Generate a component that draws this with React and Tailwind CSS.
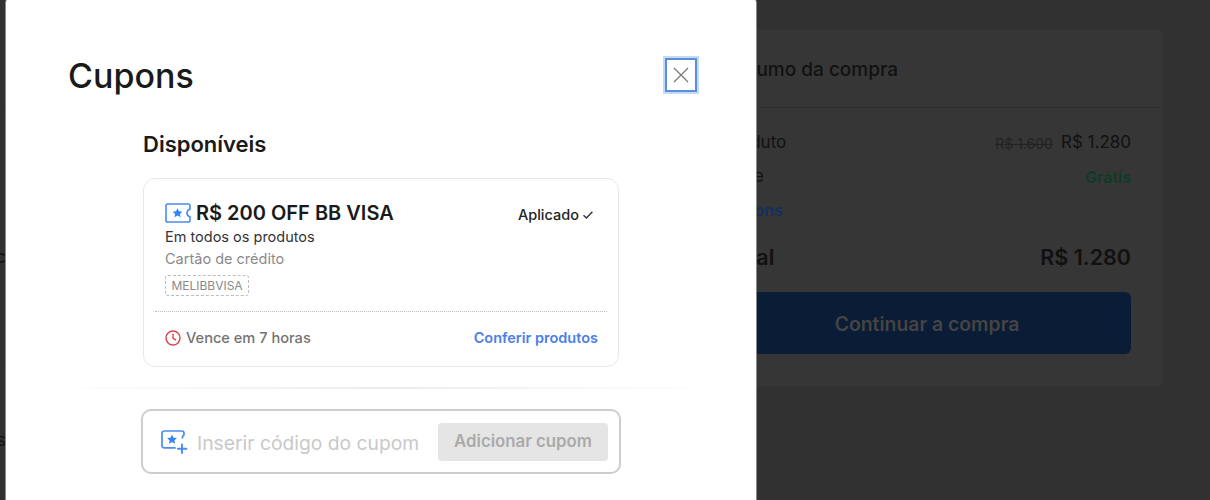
function CouponIcon({ className }) {
  return (
    <svg viewBox="0 0 26 20" fill="none" className={className}>
      <path d="M2.8 1h20.4c1 0 1.8.8 1.8 1.8v3.4a3.9 3.9 0 0 0 0 7.6v3.4c0 1-.8 1.8-1.8 1.8H2.8c-1 0-1.8-.8-1.8-1.8V2.8C1 1.8 1.8 1 2.8 1Z" stroke="#4a8cf0" strokeWidth="1.6" />
      <path d="m12.5 5.2 1.5 3.1 3.4.4-2.5 2.3.7 3.3-3.1-1.7-3 1.7.6-3.3-2.5-2.3 3.4-.4Z" fill="#3483fa" />
    </svg>
  );
}

function AddCouponIcon({ className }) {
  return (
    <svg viewBox="0 0 27 24" fill="none" className={className}>
      <path d="M14 17.9H3.2c-1.2 0-2.2-1-2.2-2.2V3.2C1 2 2 1 3.2 1h17.6c1.2 0 2.2 1 2.2 2.2v1.6a3.4 3.4 0 0 0-1.6 3.1" stroke="#4a8cf0" strokeWidth="1.7" strokeLinecap="round" />
      <path d="m11 4.6 1.5 3.1 3.4.4-2.5 2.3.7 3.3-3.1-1.7-3 1.7.6-3.3-2.5-2.3 3.4-.4Z" fill="#3483fa" />
      <path d="M21 14.5v8.5M16.8 18.8h8.6" stroke="#4a8cf0" strokeWidth="1.9" strokeLinecap="round" />
    </svg>
  );
}

function ClockIcon({ className }) {
  return (
    <svg viewBox="0 0 16 16" fill="none" className={className}>
      <circle cx="8" cy="8" r="7" stroke="#d9434e" strokeWidth="1.4" />
      <path d="M8 3.8V8.4l3 1.8" stroke="#d9434e" strokeWidth="1.4" />
    </svg>
  );
}

function LeftStrip() {
  return (
    <div className="w-[6px] shrink-0 overflow-hidden text-[#111] text-[18px]">
      <div className="h-[108px] border-b border-[#2e2e2e]" />
      <div className="flex justify-end h-[24px] mt-[137px] leading-[24px] whitespace-nowrap">
        <span className="shrink-0">c</span>
      </div>
      <div className="h-[99px] border-b border-[#2e2e2e]" />
      <div className="flex justify-end h-[24px] mt-[60px] leading-[24px] whitespace-nowrap">
        <span className="shrink-0">s</span>
      </div>
    </div>
  );
}

function Summary() {
  return (
    <div className="w-[472px] h-[356px] shrink-0 rounded-[6px] bg-[#363636] text-[#111]">
      <div className="h-[78px] flex items-center px-8 pt-[4px] text-[19px] font-medium border-b border-[#2f2f2f]">Resumo da compra</div>
      <div className="px-8 pt-[23px]">
        <div className="flex justify-between items-center h-[24px] text-[17px]">
          <span>Produto</span>
          <span className="flex items-center gap-2">
            <span className="text-[14px] line-through text-[#222]">R$ 1.600</span>
            <span className="text-[17px]">R$ 1.280</span>
          </span>
        </div>
        <div className="flex justify-between items-center h-[24px] mt-[10px] text-[17px]">
          <span>Frete</span>
          <span className="text-[16px] font-semibold text-[#0e3b27]">Grátis</span>
        </div>
        <div className="h-[20px] mt-[11px] text-[16px] leading-[20px] font-semibold text-[#12305f]">Cupons</div>
        <div className="flex justify-between items-center h-[30px] mt-[22px] text-[21.5px] font-semibold">
          <span>Total</span>
          <span>R$ 1.280</span>
        </div>
        <div className="h-[62px] mt-[20px] pt-[3px] rounded-[6px] bg-[#0a1c36] flex items-center justify-center text-[19.4px] font-semibold text-[#444]">
          Continuar a compra
        </div>
      </div>
    </div>
  );
}

function CouponCard() {
  return (
    <div className="w-[476px] h-[189px] mt-[19px] rounded-[12px] border border-[#e8e8e8] px-[11px] bg-white">
      <div className="h-[133px] border-b border-dotted border-[#bdbdbd] px-[10px] pt-[22px]">
        <div className="flex justify-between">
          <div className="flex items-center gap-[5px] h-[24px]">
            <CouponIcon className="w-[26px] h-[20px]" />
            <span className="text-[20px] font-semibold text-[#1a1a1a] leading-none">R$ 200 OFF BB VISA</span>
          </div>
          <div className="flex items-center gap-[3px] h-[24px] mr-[3px] pt-[4px] text-[14.5px] font-medium text-[#222]">
            Aplicado
            <svg viewBox="0 0 12 10" fill="none" className="w-[12px] h-[10px]">
              <path d="m1.5 5.2 2.9 2.9 6-6.4" stroke="#333" strokeWidth="1.4" />
            </svg>
          </div>
        </div>
        <p className="mt-[1px] text-[14.5px] leading-[22px] text-[#333]">Em todos os produtos</p>
        <p className="text-[14.5px] leading-[22px] text-[#8a8a8a]">Cartão de crédito</p>
        <span className="block w-[84px] h-[21px] mt-[5px] rounded-[3px] border border-dashed border-[#bdbdbd] text-center text-[12px] leading-[19px] text-[#8a8a8a]">MELIBBVISA</span>
      </div>
      <div className="flex justify-between items-center h-[52px] pl-[10px] pr-[9px]">
        <div className="flex items-center gap-[5px] pt-[1px] text-[14.6px] font-medium text-[#737373]">
          <ClockIcon className="w-[16px] h-[16px]" />
          Vence em 7 horas
        </div>
        <a className="text-[14.5px] font-semibold text-[#4a80e8]">Conferir produtos</a>
      </div>
    </div>
  );
}

function CouponModal() {
  return (
    <div className="absolute left-[6px] top-[-3px] bottom-[-20px] w-[750px] rounded-[6px] bg-white pt-[56px] ring-1 ring-[#8a8a8a]">
      <div className="flex items-start justify-between pl-[62px] pr-[59px]">
        <h1 className="text-[34px] leading-[46px] font-medium text-[#1a1a1a]">Cupons</h1>
        <button className="w-[32px] h-[34px] mt-[5px] flex items-center justify-center bg-white border-2 border-[#5b8fdc] ring-2 ring-[#c5daf7]">
          <svg viewBox="0 0 16 16" fill="none" className="w-[16px] h-[16px]">
            <path d="m1 1 14 14M15 1 1 15" stroke="#777" strokeWidth="1.2" />
          </svg>
        </button>
      </div>
      <div className="pl-[137px] mt-[30px]">
        <h2 className="text-[22px] leading-[30px] font-semibold text-[#1a1a1a]">Disponíveis</h2>
        <CouponCard />
      </div>
      <div className="h-[2px] w-[660px] ml-[50px] mt-[20px] bg-linear-to-r from-transparent via-[#ececec] to-transparent" />
      <div className="w-[480px] h-[65px] ml-[135px] mt-[20px] rounded-[10px] border-2 border-[#cdcdcd] flex items-center pl-[18px] pr-[11px]">
        <AddCouponIcon className="w-[27px] h-[24px] shrink-0" />
        <input readOnly placeholder="Inserir código do cupom" className="ml-[9px] mt-[3px] flex-1 min-w-0 text-[19.3px] outline-none placeholder:text-[#c9c9c9]" />
        <button className="w-[170px] h-[38px] rounded-[4px] bg-[#e5e5e5] text-[16.8px] font-semibold text-[#aaa]">Adicionar cupom</button>
      </div>
    </div>
  );
}

export default function App() {
  return (
    <div className="relative w-[1210px] h-[500px] overflow-hidden bg-[#313131] font-['Inter',sans-serif]">
      <div className="flex justify-between pt-[30px] pr-[47px]">
        <div className="-mt-[30px]">
          <LeftStrip />
        </div>
        <Summary />
      </div>
      <CouponModal />
    </div>
  );
}
